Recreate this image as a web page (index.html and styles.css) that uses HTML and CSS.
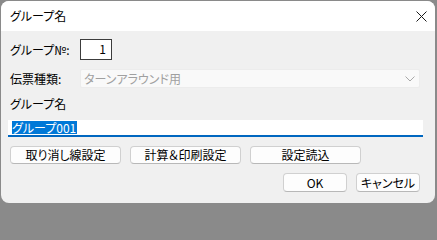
FILE: index.html
```html
<!DOCTYPE html>
<html lang="ja">
<head>
<meta charset="utf-8">
<title>グループ名</title>
<link rel="stylesheet" href="styles.css">
</head>
<body>
<div class="window">
  <div class="titlebar">
    <span class="title">グループ名</span>
    <span class="close">
      <svg width="11" height="11" viewBox="0 0 11 11"><path d="M0.5 0.5 L10.5 10.5 M10.5 0.5 L0.5 10.5" stroke="#1a1a1a" stroke-width="1" fill="none"/></svg>
    </span>
  </div>
  <div class="content">
    <div class="row row1">
      <span class="label">グループ№:</span>
      <span class="numbox">1</span>
    </div>
    <div class="row row2">
      <span class="label">伝票種類:</span>
      <span class="combo">
        <span class="combo-text">ターンアラウンド用</span>
        <svg class="chev" width="10" height="6" viewBox="0 0 10 6"><path d="M0.5 0.5 L5 5 L9.5 0.5" stroke="#a8a8a8" stroke-width="1" fill="none"/></svg>
      </span>
    </div>
    <div class="row row3">
      <span class="label">グループ名</span>
    </div>
    <div class="row row4">
      <span class="namebox"><span class="sel">グループ001</span></span>
    </div>
    <div class="row row5">
      <span class="btn wide">取り消し線設定</span>
      <span class="btn wide">計算＆印刷設定</span>
      <span class="btn wide">設定読込</span>
    </div>
    <div class="row row6">
      <span class="btn small">OK</span>
      <span class="btn small">キャンセル</span>
    </div>
  </div>
</div>
</body>
</html>
```
FILE: styles.css
```css
html, body {
  margin: 0;
  padding: 0;
}
body {
  width: 437px;
  height: 205px;
  background: #8a8a8a;
  font-family: "Noto Sans CJK JP", "Noto Sans", sans-serif;
  font-size: 12px;
  color: #000;
  overflow: hidden;
  font-feature-settings: "palt";
}
.window {
  margin: 1px 0 0 1px;
  width: 434px;
  height: 202px;
  border-radius: 8px;
  overflow: hidden;
  background: #f0f0f0;
  display: flex;
  flex-direction: column;
}
.titlebar {
  height: 30px;
  background: #ffffff;
  display: flex;
  align-items: center;
  justify-content: space-between;
  padding-left: 9px;
  flex: none;
}
.title {
  font-size: 12px;
  line-height: 14px;
}
.close {
  width: 28px;
  height: 30px;
  display: flex;
  align-items: center;
  justify-content: center;
}
.content {
  display: flex;
  flex-direction: column;
  padding: 8px 0 0 9px;
}
.row {
  display: flex;
  align-items: center;
}
.label {
  line-height: 14px;
}
.row1 {
  height: 21px;
}
.row1 .label, .row2 .label {
  width: 70px;
}
.numbox {
  box-sizing: border-box;
  width: 32px;
  height: 21px;
  border: 1px solid #3c3c3c;
  background: #fff;
  text-align: right;
  padding-right: 5px;
  line-height: 18px;
}
.row2 {
  margin-top: 9px;
  height: 19px;
}
.combo {
  box-sizing: border-box;
  width: 340px;
  height: 19px;
  background: #f9f9f9;
  border: 1px solid #ececec;
  border-radius: 2px;
  display: flex;
  align-items: center;
  justify-content: space-between;
  padding: 0 4px 0 3px;
  color: #a0a0a0;
}
.combo-text {
  line-height: 14px;
}
.row3 {
  margin-top: 8px;
  height: 15px;
}
.row4 {
  margin-top: 9px;
}
.namebox {
  box-sizing: border-box;
  margin-left: -2px;
  width: 415px;
  height: 17px;
  background: #fff;
  border-bottom: 2px solid #0067c0;
  padding: 1px 0 0 4px;
  display: flex;
  align-items: flex-start;
}
.sel {
  background: #0078d7;
  color: #fff;
  line-height: 13px;
  padding-right: 1px;
}
.row5 {
  margin-top: 9px;
  gap: 9px;
}
.btn {
  box-sizing: border-box;
  height: 18px;
  background: #fdfdfd;
  border: 1px solid #d0d0d0;
  border-bottom-color: #b8b8b8;
  border-radius: 4px;
  display: flex;
  align-items: center;
  justify-content: center;
  line-height: 14px;
}
.wide {
  width: 111px;
}
.row6 {
  margin-top: 9px;
  gap: 9px;
  justify-content: flex-end;
  padding-right: 15px;
}
.small {
  width: 64px;
  height: 19px;
}
```
